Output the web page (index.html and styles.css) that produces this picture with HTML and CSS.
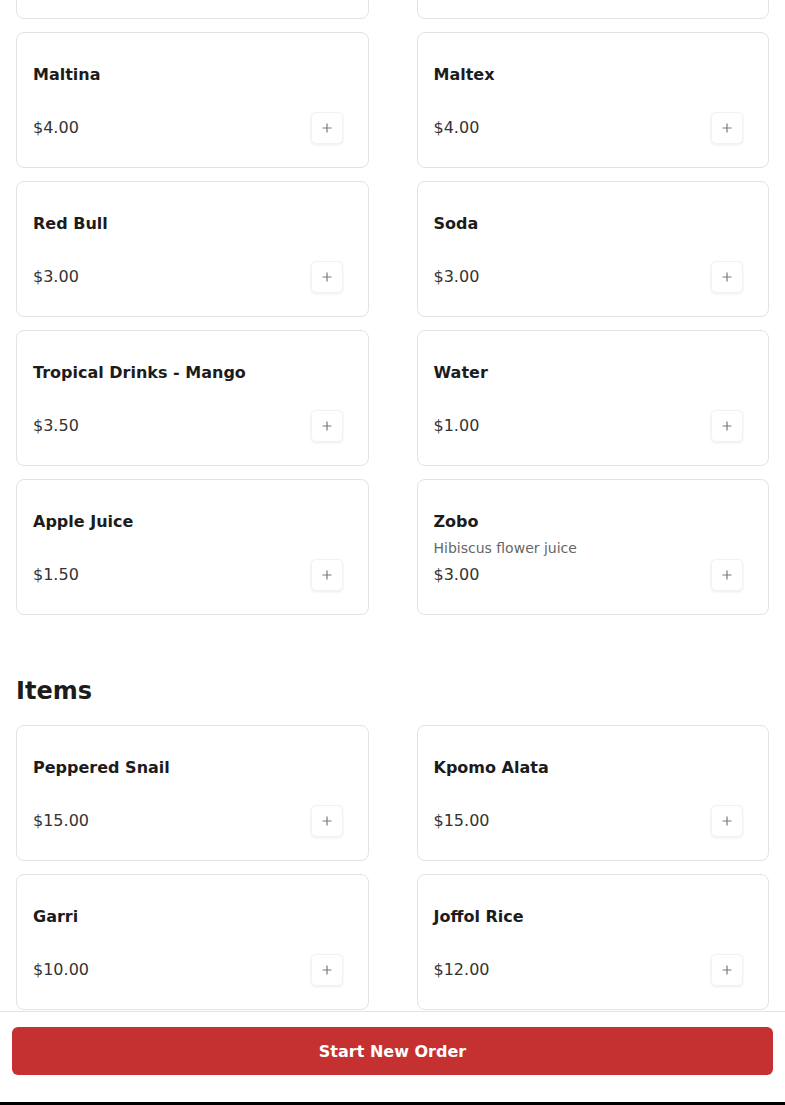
FILE: index.html
```html
<!DOCTYPE html>
<html lang="en">
<head>
<meta charset="utf-8">
<title>Menu</title>
<link rel="stylesheet" href="styles.css">
</head>
<body>
<main class="menu">
  <section class="section section-first">
    <div class="grid">
      <div class="card"><div class="card-title"></div><div class="card-desc"></div><div class="card-row"><span class="price"></span><button class="add" aria-label="Add"><svg width="10" height="10" viewBox="0 0 10 10"><path d="M5 0.5V9.5M0.5 5H9.5" stroke="#7a7a7a" stroke-width="1.2"/></svg></button></div></div>
      <div class="card"><div class="card-title"></div><div class="card-desc"></div><div class="card-row"><span class="price"></span><button class="add" aria-label="Add"><svg width="10" height="10" viewBox="0 0 10 10"><path d="M5 0.5V9.5M0.5 5H9.5" stroke="#7a7a7a" stroke-width="1.2"/></svg></button></div></div>
      <div class="card"><div class="card-title">Maltina</div><div class="card-desc"></div><div class="card-row"><span class="price">$4.00</span><button class="add" aria-label="Add"><svg width="10" height="10" viewBox="0 0 10 10"><path d="M5 0.5V9.5M0.5 5H9.5" stroke="#7a7a7a" stroke-width="1.2"/></svg></button></div></div>
      <div class="card"><div class="card-title">Maltex</div><div class="card-desc"></div><div class="card-row"><span class="price">$4.00</span><button class="add" aria-label="Add"><svg width="10" height="10" viewBox="0 0 10 10"><path d="M5 0.5V9.5M0.5 5H9.5" stroke="#7a7a7a" stroke-width="1.2"/></svg></button></div></div>
      <div class="card"><div class="card-title">Red Bull</div><div class="card-desc"></div><div class="card-row"><span class="price">$3.00</span><button class="add" aria-label="Add"><svg width="10" height="10" viewBox="0 0 10 10"><path d="M5 0.5V9.5M0.5 5H9.5" stroke="#7a7a7a" stroke-width="1.2"/></svg></button></div></div>
      <div class="card"><div class="card-title">Soda</div><div class="card-desc"></div><div class="card-row"><span class="price">$3.00</span><button class="add" aria-label="Add"><svg width="10" height="10" viewBox="0 0 10 10"><path d="M5 0.5V9.5M0.5 5H9.5" stroke="#7a7a7a" stroke-width="1.2"/></svg></button></div></div>
      <div class="card"><div class="card-title">Tropical Drinks - Mango</div><div class="card-desc"></div><div class="card-row"><span class="price">$3.50</span><button class="add" aria-label="Add"><svg width="10" height="10" viewBox="0 0 10 10"><path d="M5 0.5V9.5M0.5 5H9.5" stroke="#7a7a7a" stroke-width="1.2"/></svg></button></div></div>
      <div class="card"><div class="card-title">Water</div><div class="card-desc"></div><div class="card-row"><span class="price">$1.00</span><button class="add" aria-label="Add"><svg width="10" height="10" viewBox="0 0 10 10"><path d="M5 0.5V9.5M0.5 5H9.5" stroke="#7a7a7a" stroke-width="1.2"/></svg></button></div></div>
      <div class="card"><div class="card-title">Apple Juice</div><div class="card-desc"></div><div class="card-row"><span class="price">$1.50</span><button class="add" aria-label="Add"><svg width="10" height="10" viewBox="0 0 10 10"><path d="M5 0.5V9.5M0.5 5H9.5" stroke="#7a7a7a" stroke-width="1.2"/></svg></button></div></div>
      <div class="card"><div class="card-title">Zobo</div><div class="card-desc">Hibiscus flower juice</div><div class="card-row"><span class="price">$3.00</span><button class="add" aria-label="Add"><svg width="10" height="10" viewBox="0 0 10 10"><path d="M5 0.5V9.5M0.5 5H9.5" stroke="#7a7a7a" stroke-width="1.2"/></svg></button></div></div>
    </div>
  </section>
  <section class="section">
    <h2 class="section-title">Items</h2>
    <div class="grid">
      <div class="card"><div class="card-title">Peppered Snail</div><div class="card-desc"></div><div class="card-row"><span class="price">$15.00</span><button class="add" aria-label="Add"><svg width="10" height="10" viewBox="0 0 10 10"><path d="M5 0.5V9.5M0.5 5H9.5" stroke="#7a7a7a" stroke-width="1.2"/></svg></button></div></div>
      <div class="card"><div class="card-title">Kpomo Alata</div><div class="card-desc"></div><div class="card-row"><span class="price">$15.00</span><button class="add" aria-label="Add"><svg width="10" height="10" viewBox="0 0 10 10"><path d="M5 0.5V9.5M0.5 5H9.5" stroke="#7a7a7a" stroke-width="1.2"/></svg></button></div></div>
      <div class="card"><div class="card-title">Garri</div><div class="card-desc"></div><div class="card-row"><span class="price">$10.00</span><button class="add" aria-label="Add"><svg width="10" height="10" viewBox="0 0 10 10"><path d="M5 0.5V9.5M0.5 5H9.5" stroke="#7a7a7a" stroke-width="1.2"/></svg></button></div></div>
      <div class="card"><div class="card-title">Joffol Rice</div><div class="card-desc"></div><div class="card-row"><span class="price">$12.00</span><button class="add" aria-label="Add"><svg width="10" height="10" viewBox="0 0 10 10"><path d="M5 0.5V9.5M0.5 5H9.5" stroke="#7a7a7a" stroke-width="1.2"/></svg></button></div></div>
    </div>
  </section>
</main>
<footer class="footer">
  <button class="primary">Start New Order</button>
</footer>
</body>
</html>
```

FILE: styles.css
```css
html, body {
  margin: 0;
  padding: 0;
  background: #ffffff;
  overflow: hidden;
}
body {
  font-family: "DejaVu Sans", sans-serif;
  color: #1c1c1c;
  height: 1105px;
}
.menu {
  margin-top: -117px;
  padding: 0 16px;
}
.section-title {
  margin: 58px 0 16px;
  font-size: 24px;
  line-height: 36px;
  font-weight: 700;
  color: #1c1c1c;
}
.grid {
  display: grid;
  grid-template-columns: 1fr 1fr;
  column-gap: 48px;
  row-gap: 13px;
}
.card {
  background: #fff;
  border: 1px solid #e3e3e3;
  border-radius: 8px;
  padding: 30px 16px 23px;
}
.card-title {
  min-height: 24px;
  font-size: 16px;
  line-height: 24px;
  font-weight: 700;
  color: #1c1c1c;
}
.card-desc {
  margin-top: 4px;
  min-height: 20px;
  font-size: 14px;
  line-height: 20px;
  color: #666;
}
.card-row {
  margin-top: 1px;
  height: 32px;
  display: flex;
  align-items: center;
  justify-content: space-between;
}
.price {
  font-size: 16px;
  line-height: 24px;
  color: #333;
}
.add {
  width: 32px;
  height: 32px;
  margin-right: 9px;
  padding: 0;
  display: flex;
  align-items: center;
  justify-content: center;
  background: #fff;
  border: 1px solid #f2f2f2;
  border-radius: 5px;
  box-shadow: 0 1px 3px rgba(0,0,0,0.08);
}
.footer {
  position: fixed;
  left: 0;
  right: 0;
  bottom: 0;
  background: #fff;
  border-top: 1px solid #e3e3e3;
  border-bottom: 3px solid #000;
  padding: 15px 12px 27px;
}
.primary {
  display: block;
  width: 100%;
  height: 48px;
  border: none;
  border-radius: 6px;
  background: #c53030;
  color: #fff;
  font-family: "DejaVu Sans", sans-serif;
  font-size: 16px;
  font-weight: 700;
}
```
